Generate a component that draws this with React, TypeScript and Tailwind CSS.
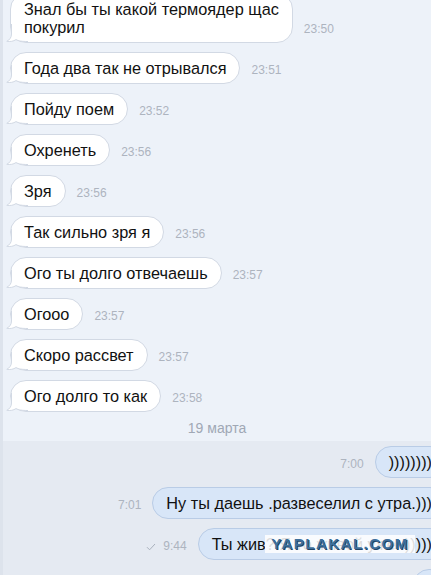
import React from 'react';

const incoming = [
  { text: 'Знал бы ты какой термоядер щас\nпокурил', time: '23:50' },
  { text: 'Года два так не отрывался', time: '23:51' },
  { text: 'Пойду поем', time: '23:52' },
  { text: 'Охренеть', time: '23:56' },
  { text: 'Зря', time: '23:56' },
  { text: 'Так сильно зря я', time: '23:56' },
  { text: 'Ого ты долго отвечаешь', time: '23:57' },
  { text: 'Огооо', time: '23:57' },
  { text: 'Скоро рассвет', time: '23:57' },
  { text: 'Ого долго то как', time: '23:58' },
];

const outgoing = [
  { text: '))))))))', time: '7:00', read: true },
  { text: 'Ну ты даешь .развеселил с утра.)))', time: '7:01', read: true },
  { text: 'Ты жив? Я то живой уже .)))))', time: '9:44', read: false },
  { text: ')', time: '', read: true },
];

function Tail() {
  return (
    <svg className="absolute -left-[5px] bottom-0" width="22" height="18" viewBox="0 0 22 18">
      <path d="M5.5 0 L5.5 10 C5.5 13.5 3.5 16 0.8 17.3 C4 17.9 7.5 17.3 10 15.6 C12.5 17 16 17.5 22 17.5 L22 12 L12 4 L7 0 Z" fill="#ffffff" />
      <path d="M5.5 0 L5.5 10 C5.5 13.5 3.5 16 0.8 17.3 C4 17.9 7.5 17.3 10 15.6 C12.5 17 16 17.5 22 17.5" fill="none" stroke="#d2d9e4" strokeWidth="1" />
    </svg>
  );
}

function Check() {
  return (
    <svg width="10" height="8" viewBox="0 0 10 8" className="mb-[3px]">
      <path d="M1 4.2 L3.6 6.8 L9 1" fill="none" stroke="#a9b1bd" strokeWidth="1" />
    </svg>
  );
}

export default function App() {
  return (
    <div
      className="relative w-[431px] h-[575px] overflow-hidden bg-[#edf2f9] border-l-[3px] border-[#dde3ec] text-[#111]"
      style={{ fontFamily: '"Liberation Sans", Arial, sans-serif' }}
    >
      <div className="-mt-[7px] pl-[7px] flex flex-col gap-[9px]">
        {incoming.map((m, i) => (
          <div key={i} className="flex items-end gap-[11px]">
            <div className="relative whitespace-pre-line bg-white border border-[#d2d9e4] rounded-[16px] px-[13px] py-[6px] text-[16.3px] leading-[18px]">
              <Tail />
              <span className="relative">{m.text}</span>
            </div>
            <span className="text-[12px] leading-4 text-[#adb4bf] mb-[6px]">{m.time}</span>
          </div>
        ))}
      </div>

      <div className="pt-[6px] pb-[3px] text-center text-[14px] leading-5 text-[#a0a8b5]">19 марта</div>

      <div className="bg-[#e5eaf2] pt-[5px] h-full -mr-[15px] flex flex-col items-end gap-[9px]">
        {outgoing.map((m, i) => (
          <div key={i} className="flex items-end gap-[11px]">
            {m.time && (
              <span className="flex items-end gap-[7px] text-[12px] leading-4 text-[#adb4bf] mb-[6px]">
                {!m.read && <Check />}
                {m.time}
              </span>
            )}
            <div className="whitespace-nowrap bg-[#d8e6f8] border border-[#b9cce6] rounded-[16px] px-[13px] py-[6px] text-[16.3px] leading-[18px]">
              {m.text}
            </div>
          </div>
        ))}
      </div>

      <div className="absolute left-[262px] top-[535px] w-[150px] h-[18px] bg-white/85 flex items-center justify-center">
        <span className="font-bold text-[15px] leading-4 tracking-[1.5px] text-[#3d6f9c] [text-shadow:1px_1px_0_#1f4466]">
          YAPLAKAL.COM
        </span>
      </div>
    </div>
  );
}
